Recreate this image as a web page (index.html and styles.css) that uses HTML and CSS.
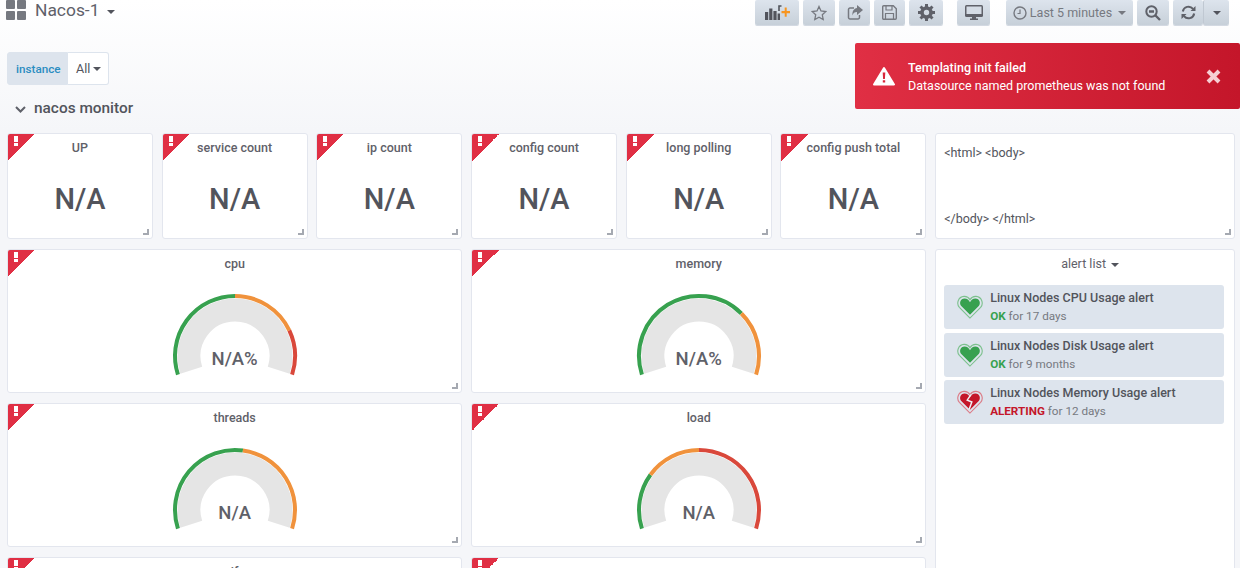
FILE: index.html
```html
<!DOCTYPE html>
<html>
  <head>
    <meta charset="UTF-8" />
    <title>Nacos-1</title>
    <link rel="stylesheet" href="styles.css">
  </head>
  <body>
    <!-- top bar -->
    <div class="navbar">
      <div class="nav-title">
        <svg class="grid-icon" viewBox="0 0 20 20">
          <rect x="0" y="0" width="9" height="9" rx="1"/><rect x="11" y="0" width="9" height="9" rx="1"/>
          <rect x="0" y="11" width="9" height="9" rx="1"/><rect x="11" y="11" width="9" height="9" rx="1"/>
        </svg>
        <span>Nacos-1</span>
        <i class="caret"></i>
      </div>
      <div class="nav-buttons">
        <div class="btn btn-add">
          <svg width="25" height="15" viewBox="0 0 25 15">
            <path fill="#52545c" d="M0 7h3.200v8H0zM4.200 3.500h3.200V15H4.200zM8.400 6h3.200v9H8.400zM12.600 8.500h2.400V15h-2.400z"/>
            <path fill="none" stroke="#52545c" stroke-width="1.600" d="M16.500 1h-2.500v5"/>
            <path fill="#f79520" d="M16.500 6h3.200V2.500h2V6H25v2.200h-3.300v3.500h-2V8.200h-3.200z"/>
          </svg>
        </div>
        <div class="btn btn-star">
          <svg width="16" height="16" viewBox="0 0 16 16"><path fill="none" stroke="#767980" stroke-width="1.300" d="M8 1.500l2 4.400 4.800.6-3.500 3.300.9 4.700L8 12.200l-4.200 2.300.9-4.700L1.200 6.500 6 5.900z"/></svg>
        </div>
        <div class="btn btn-share">
          <svg width="16" height="16" viewBox="0 0 16 16">
            <path fill="none" stroke="#767980" stroke-width="1.500" d="M7 3H3a1.500 1.500 0 0 0-1.500 1.500v8A1.500 1.500 0 0 0 3 14h8a1.500 1.500 0 0 0 1.500-1.500V10"/>
            <path fill="#767980" d="M10 0l6 5-6 5V7C7.500 7 6 8 5.500 10.500 5 6 7 3.500 10 3z"/>
          </svg>
        </div>
        <div class="btn btn-save">
          <svg width="15" height="15" viewBox="0 0 15 15">
            <path fill="none" stroke="#767980" stroke-width="1.400" d="M1.700.7h9.600l3 3v9.600a1 1 0 0 1-1 1H1.700a1 1 0 0 1-1-1V1.700a1 1 0 0 1 1-1z"/>
            <path fill="none" stroke="#767980" stroke-width="1.200" d="M4 1v4h6V1M3.500 14V8.500h8V14"/>
          </svg>
        </div>
        <div class="btn btn-cog">
          <svg width="17" height="17" viewBox="0 0 17 17">
            <circle cx="8.500" cy="8.500" r="4.500" fill="none" stroke="#5f6169" stroke-width="3.600"/>
            <path stroke="#5f6169" stroke-width="3" d="M8.500 0v3M8.500 14v3M0 8.500h3M14 8.500h3M2.500 2.500l2 2M12.500 12.500l2 2M2.500 14.500l2-2M12.500 4.500l2-2"/>
          </svg>
        </div>
        <div class="btn btn-tv">
          <svg width="18" height="15" viewBox="0 0 18 15">
            <rect x="0" y="0" width="18" height="12" rx="1.500" fill="#5f6169"/>
            <rect x="1.500" y="1.500" width="15" height="7.500" fill="#d5dce5"/>
            <path fill="#5f6169" d="M7 12h4v1.500h2V15H5v-1.500h2z"/>
          </svg>
        </div>
        <div class="btn btn-time">
          <svg width="14" height="14" viewBox="0 0 14 14"><circle cx="7" cy="7" r="6" fill="none" stroke="#767980" stroke-width="1.400"/><path fill="none" stroke="#767980" stroke-width="1.200" d="M7 3.500V7.500H4.500"/></svg>
          <span>Last 5 minutes</span>
          <i class="caret"></i>
        </div>
        <div class="btn btn-zoom">
          <svg width="16" height="16" viewBox="0 0 16 16"><circle cx="6.500" cy="6.500" r="5.200" fill="none" stroke="#5f6169" stroke-width="2"/><path stroke="#5f6169" stroke-width="2.400" d="M10.500 10.500l4.500 4.500M4 6.500h5"/></svg>
        </div>
        <div class="btn-group">
          <div class="btn btn-refresh">
            <svg width="15" height="15" viewBox="0 0 15 15">
              <path fill="none" stroke="#5f6169" stroke-width="2" d="M1.800 6.500A5.800 5.800 0 0 1 12 3.800M13.200 8.500A5.800 5.800 0 0 1 3 11.200"/>
              <path fill="#5f6169" d="M14.500 1v5h-5zM.5 14V9h5z"/>
            </svg>
          </div>
          <div class="btn btn-more"><i class="caret"></i></div>
        </div>
      </div>
    </div>

    <!-- variable row -->
    <div class="submenu">
      <span class="var-label">instance</span>
      <span class="var-value">All <i class="caret"></i></span>
    </div>

    <div class="alert-error">
      <svg width="22" height="20" viewBox="0 0 22 20">
        <path fill="#fff" stroke="#fff" stroke-width="2" stroke-linejoin="round" d="M11 2L21 18.500H1z"/>
        <path fill="#d9263b" d="M9.700 6.500h2.600l-.4 6.500h-1.800zM9.800 14.300h2.400v2.300H9.800z"/>
      </svg>
      <div class="alert-text">
        <div class="alert-title">Templating init failed</div>
        <div>Datasource named prometheus was not found</div>
      </div>
      <svg class="alert-close" width="15" height="15" viewBox="0 0 15 15"><path stroke="#f6cfd3" stroke-width="4" d="M2 2l11 11M13 2L2 13"/></svg>
    </div>

    <div class="row-title">
      <svg width="11" height="7" viewBox="0 0 11 7"><path fill="none" stroke="#5f6169" stroke-width="2" d="M1 1l4.500 4.500L10 1"/></svg>
      <span>nacos monitor</span>
    </div>

    <!-- panels -->
    <div class="dashboard">
      <div class="panel panel-stat"><i class="corner"></i><h3>UP</h3><div class="big">N/A</div><i class="resize"></i></div>
      <div class="panel panel-stat"><i class="corner"></i><h3>service count</h3><div class="big">N/A</div><i class="resize"></i></div>
      <div class="panel panel-stat"><i class="corner"></i><h3>ip count</h3><div class="big">N/A</div><i class="resize"></i></div>
      <div class="panel panel-stat"><i class="corner"></i><h3>config count</h3><div class="big">N/A</div><i class="resize"></i></div>
      <div class="panel panel-stat"><i class="corner"></i><h3>long polling</h3><div class="big">N/A</div><i class="resize"></i></div>
      <div class="panel panel-stat"><i class="corner"></i><h3>config push total</h3><div class="big">N/A</div><i class="resize"></i></div>
      <div class="panel panel-text">
        <p>&lt;html&gt; &lt;body&gt;</p>
        <p>&lt;/body&gt; &lt;/html&gt;</p>
        <i class="resize"></i>
      </div>

      <div class="panel panel-gauge"><i class="corner"></i><h3>cpu</h3>
        <div class="gauge">
          <svg viewBox="-64 -64 128 88" width="128" height="88">
            <path class="band" d="M-43.750 14.200A46 46 0 1 1 43.750 14.200"/>
            <path class="arc green" d="M-57.060 18.540A60 60 0 0 1 0 -60"/>
            <path class="arc orange" d="M0 -60A60 60 0 0 1 54.300 -25.600"/>
            <path class="arc red" d="M54.300 -25.600A60 60 0 0 1 57.060 18.540"/>
          </svg>
          <span>N/A%</span>
        </div><i class="resize"></i></div>
      <div class="panel panel-gauge"><i class="corner"></i><h3>memory</h3>
        <div class="gauge">
          <svg viewBox="-64 -64 128 88" width="128" height="88">
            <path class="band" d="M-43.750 14.200A46 46 0 1 1 43.750 14.200"/>
            <path class="arc green" d="M-57.060 18.540A60 60 0 0 1 42.400 -42.500"/>
            <path class="arc orange" d="M42.400 -42.500A60 60 0 0 1 57.060 18.540"/>
          </svg>
          <span>N/A%</span>
        </div><i class="resize"></i></div>

      <div class="panel panel-alerts">
        <h3>alert list <i class="caret"></i></h3>
        <div class="alert-row">
          <svg class="heart" width="26" height="24" viewBox="0 0 28 26">
            <path fill="none" stroke="#7cc18d" stroke-width="1.200" d="M14 25L2.500 13.500C-1 9.500 1 2 7.500 1.500 10.500 1.300 12.800 3 14 5c1.200-2 3.500-3.700 6.500-3.500C27 2 29 9.500 25.500 13.500z"/>
            <path fill="#37a14f" d="M14 21.500L4.500 12C2 9 3.500 4 8 3.800c2.800-.1 4.800 1.700 6 4 1.200-2.300 3.200-4.100 6-4C24.500 4 26 9 23.500 12z"/>
          </svg>
          <div>
            <div class="alert-name">Linux Nodes CPU Usage alert</div>
            <div class="alert-state"><b class="ok">OK</b> for 17 days</div>
          </div>
        </div>
        <div class="alert-row">
          <svg class="heart" width="26" height="24" viewBox="0 0 28 26">
            <path fill="none" stroke="#7cc18d" stroke-width="1.200" d="M14 25L2.500 13.500C-1 9.500 1 2 7.500 1.500 10.500 1.300 12.800 3 14 5c1.200-2 3.500-3.700 6.500-3.500C27 2 29 9.500 25.500 13.500z"/>
            <path fill="#37a14f" d="M14 21.500L4.500 12C2 9 3.500 4 8 3.800c2.800-.1 4.800 1.700 6 4 1.200-2.300 3.200-4.100 6-4C24.500 4 26 9 23.500 12z"/>
          </svg>
          <div>
            <div class="alert-name">Linux Nodes Disk Usage alert</div>
            <div class="alert-state"><b class="ok">OK</b> for 9 months</div>
          </div>
        </div>
        <div class="alert-row">
          <svg class="heart" width="26" height="24" viewBox="0 0 28 26">
            <path fill="none" stroke="#dc7a86" stroke-width="1.200" d="M14 25L2.500 13.500C-1 9.500 1 2 7.500 1.500 10.500 1.300 12.800 3 14 5c1.200-2 3.500-3.700 6.500-3.500C27 2 29 9.500 25.500 13.500z"/>
            <path fill="#c4162a" d="M14 21.500L4.500 12C2 9 3.500 4 8 3.800c2.800-.1 4.800 1.700 6 4 1.200-2.300 3.200-4.100 6-4C24.500 4 26 9 23.500 12z"/>
            <path fill="none" stroke="#f0f2f6" stroke-width="1.600" d="M15 5l-4 6 5 2-3 8"/>
          </svg>
          <div>
            <div class="alert-name">Linux Nodes Memory Usage alert</div>
            <div class="alert-state"><b class="alerting">ALERTING</b> for 12 days</div>
          </div>
        </div>
      </div>

      <div class="panel panel-gauge"><i class="corner"></i><h3>threads</h3>
        <div class="gauge">
          <svg viewBox="-64 -64 128 88" width="128" height="88">
            <path class="band" d="M-43.750 14.200A46 46 0 1 1 43.750 14.200"/>
            <path class="arc green" d="M-57.060 18.540A60 60 0 0 1 7.900 -59.500"/>
            <path class="arc orange" d="M7.900 -59.500A60 60 0 0 1 57.060 18.540"/>
          </svg>
          <span>N/A</span>
        </div><i class="resize"></i></div>
      <div class="panel panel-gauge"><i class="corner"></i><h3>load</h3>
        <div class="gauge">
          <svg viewBox="-64 -64 128 88" width="128" height="88">
            <path class="band" d="M-43.750 14.200A46 46 0 1 1 43.750 14.200"/>
            <path class="arc green" d="M-57.060 18.540A60 60 0 0 1 -48.500 -35.300"/>
            <path class="arc orange" d="M-48.500 -35.300A60 60 0 0 1 0 -60"/>
            <path class="arc red" d="M0 -60A60 60 0 0 1 57.060 18.540"/>
          </svg>
          <span>N/A</span>
        </div><i class="resize"></i></div>

      <div class="panel panel-gauge"><i class="corner"></i><h3>if</h3></div>
      <div class="panel panel-gauge"><i class="corner"></i></div>
    </div>
  </body>
</html>
```

FILE: styles.css
```css
* {
  box-sizing: border-box;
}

html,
body {
  height: 568px;
  overflow: hidden;
}

body {
  position: relative;
  margin: 0;
  font-family: Roboto, "Helvetica Neue", Arial, sans-serif;
  font-size: 12.5px;
  color: #52545c;
  background: linear-gradient(180deg, #ffffff 0, #f5f6f9 130px);
}

.caret {
  display: inline-block;
  width: 0;
  height: 0;
  border-left: 4px solid transparent;
  border-right: 4px solid transparent;
  border-top: 4px solid #52545c;
  vertical-align: middle;
}

/* top bar */
.navbar {
  display: flex;
  justify-content: space-between;
  height: 26px;
  overflow: hidden;
}

.nav-title {
  display: flex;
  align-items: center;
  padding-left: 6px;
  height: 20px;
  font-size: 17.4px;
  color: #5f6169;
}

.grid-icon {
  width: 20px;
  height: 20px;
  margin-right: 9px;
  fill: #767980;
}

.nav-title .caret {
  margin: 3px 0 0 8px;
}

.nav-buttons {
  display: flex;
  align-items: flex-start;
  padding-right: 11px;
}

.btn {
  display: flex;
  align-items: center;
  justify-content: center;
  height: 25px;
  margin-left: 4px;
  border-radius: 2px;
  background: linear-gradient(180deg, #dde4ed, #c7d0d9);
  box-shadow: 0 1px 0 #d3d9e2;
  color: #767980;
}

.btn-add { width: 44px; margin-left: 0; }
.btn-star { width: 32px; }
.btn-share { width: 31px; }
.btn-save { width: 31px; }
.btn-cog { width: 34px; }
.btn-tv { width: 33px; margin-left: 14px; }
.btn-zoom { width: 32px; }

.btn-time {
  width: 127px;
  margin-left: 16px;
  gap: 3px;
  font-size: 12.5px;
}

.btn-time .caret {
  margin-left: 3px;
  border-top-color: #767980;
}

.btn-group {
  display: flex;
  margin-left: 4px;
}

.btn-group .btn {
  margin-left: 0;
}

.btn-refresh {
  width: 30px;
}

.btn-more {
  width: 26px;
  border-left: 1px solid #c0c8d2;
}

/* variables */
.submenu {
  display: flex;
  height: 33px;
  margin: 26px 0 0 7px;
}

.var-label {
  display: flex;
  align-items: center;
  padding-left: 8px;
  width: 61px;
  font-size: 11.7px;
  font-weight: 500;
  color: #2b8dc1;
  background: #dde4ed;
  border: 1px solid #dde4ed;
  border-radius: 3px 0 0 3px;
}

.var-value {
  display: flex;
  align-items: center;
  gap: 3px;
  width: 41px;
  padding-left: 8px;
  background: #fff;
  border: 1px solid #dde4ed;
  border-left: 0;
  border-radius: 0 3px 3px 0;
}

/* floats over the page at the right edge */
.alert-error {
  position: absolute;
  top: 43px;
  right: 0;
  display: flex;
  align-items: center;
  width: 385px;
  height: 66px;
  padding: 0 19px 0 18px;
  border-radius: 2px;
  color: #fff;
  background: linear-gradient(90deg, #e02f44, #c4162a);
}

.alert-text {
  flex: 1;
  margin-left: 13px;
  padding-top: 2px;
  line-height: 18px;
}

.alert-title {
  font-weight: 500;
}

.row-title {
  display: flex;
  align-items: center;
  gap: 8px;
  height: 24px;
  margin: 11px 0 0 15px;
  font-size: 15.4px;
  font-weight: 500;
}

.row-title svg {
  margin-top: 3px;
}

/* grid */
.dashboard {
  display: grid;
  grid-template-columns: repeat(6, 145.9px) 300px;
  grid-template-rows: 106px 144px 144px 144px;
  gap: 10px 8.8px;
  height: 435px;
  overflow: hidden;
  margin: 13px 0 0 7px;
}

.panel {
  position: relative;
  overflow: hidden;
  background: #fff;
  border: 1px solid #e3e6ee;
  border-radius: 3px;
}

.panel h3 {
  margin: 0;
  padding-top: 6px;
  font-size: 12.5px;
  line-height: 16px;
  font-weight: 500;
  text-align: center;
  color: #5f6169;
}

.corner {
  position: absolute;
  top: 0;
  left: 0;
  width: 27px;
  height: 27px;
  background: linear-gradient(135deg, #e02f44 50%, transparent 50%);
}

/* the exclamation mark: bar and dot */
.corner::before {
  content: "";
  position: absolute;
  top: 2px;
  left: 6px;
  width: 4px;
  height: 6px;
  background: #fff;
}

.corner::after {
  content: "";
  position: absolute;
  top: 9px;
  left: 6px;
  width: 4px;
  height: 3px;
  background: #fff;
}

.resize {
  position: absolute;
  right: 3px;
  bottom: 3px;
  width: 6px;
  height: 6px;
  border-right: 2px solid #a5a9b1;
  border-bottom: 2px solid #a5a9b1;
}

.big {
  margin-top: 23px;
  font-size: 29px;
  line-height: 40px;
  font-weight: 500;
  text-align: center;
  color: #52545c;
}

.panel-text {
  padding: 8px;
  line-height: 22px;
}

.panel-text p {
  margin: 0 0 44px;
}

.panel-gauge {
  grid-column: span 3;
}

.gauge {
  position: relative;
  width: 128px;
  margin: 20px auto 0;
}

.gauge svg {
  display: block;
}

.gauge span {
  position: absolute;
  left: 0;
  right: 0;
  top: 55px;
  font-size: 18.5px;
  line-height: 24px;
  font-weight: 500;
  text-align: center;
  color: #5f6169;
}

.band {
  fill: none;
  stroke: #e5e5e5;
  stroke-width: 23;
}

.arc {
  fill: none;
  stroke-width: 4;
}

.green { stroke: #37a14f; }
.orange { stroke: #f0923c; }
.red { stroke: #d9483b; }

/* alert list */
.panel-alerts {
  grid-row: span 3;
  padding: 0 10px 0 8px;
}

.panel-alerts h3 {
  padding-left: 12px;
  padding-bottom: 13px;
  font-weight: 400;
}

.panel-alerts .caret {
  margin-left: 2px;
}

.alert-row {
  display: flex;
  align-items: center;
  gap: 7px;
  height: 44px;
  margin-bottom: 3.5px;
  padding-left: 13px;
  border-radius: 3px;
  background: #dde4ed;
}

.alert-name {
  font-weight: 500;
  line-height: 18px;
}

.alert-state {
  font-size: 11.7px;
  line-height: 18px;
  color: #767980;
}

.alert-state b {
  font-weight: 700;
}

.ok { color: #37a14f; }
.alerting { color: #c4162a; }
```
